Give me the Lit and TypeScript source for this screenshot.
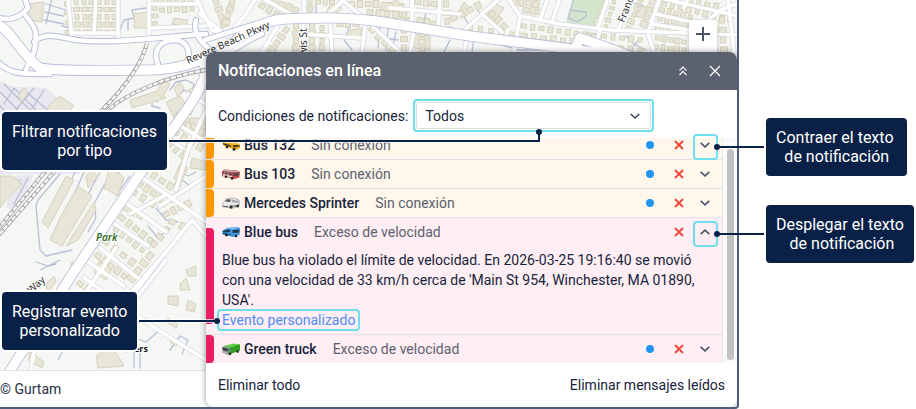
import { LitElement, html, svg, css, nothing } from "lit";
import { customElement, property, state } from "lit/decorators.js";
import { classMap } from "lit/directives/class-map.js";

type Point = [number, number];

/* ---------- map data ---------- */

const highways = [
  "M-4 24C12 30 20 54 40 68C60 72 120 70 150 70C180 70 205 60 225 48C245 34 262 20 285 19C330 17 350 18 375 21L470 36C520 43 570 47 640 60",
  "M206 72C200 96 176 124 140 174L75 270L8 374",
  "M640 60L600 45L580 38L570 60",
];

const ramps = [
  "M26 16C36 28 38 32 34 52C32 60 28 64 26 70",
  "M-2 62C10 74 20 74 50 74",
  "M34 42C44 32 56 36 76 40C110 44 150 38 206 34",
  "M158 64C152 50 160 40 176 40C190 42 192 56 184 66",
  "M196 20C192 36 204 44 212 52",
  "M-2 18C8 20 18 20 28 8L24 -4",
  "M205 40L262 22",
  "M202 66C226 58 238 44 262 34",
];

const streets = [
  "M68 -2L72 40", "M118 -2L118 40", "M149 -2L149 36", "M96 -2L94 34", "M152 4L200 4", "M72 33L118 33", "M150 28L206 26",
  "M196 -2L212 30L232 36", "M256 -2L246 14L228 36", "M200 14L222 32", "M262 -2L294 16", "M304 -2L304 52", "M346 -2L326 16", "M340 -2L366 20L400 52",
  "M366 20L362 52", "M412 -2L412 26", "M390 8L460 14", "M280 22L262 52", "M330 20L332 52", "M300 34L360 38", "M414 30L410 52", "M440 -2L438 30",
  "M460 34L500 -2", "M482 14L502 32", "M508 -2L520 16L516 40L514 52", "M520 16L560 24L610 30L738 35", "M548 -2L540 20", "M560 -2L552 22",
  "M608 -2L598 28", "M632 -2L618 30", "M660 -2L652 20L648 34L654 52", "M660 -2L738 16", "M656 14L700 24", "M652 24L690 30", "M738 4C722 6 714 16 706 22",
  "M728 -2L734 52", "M468 34L464 52", "M600 30L594 52", "M688 -2L684 8",
  "M192 96L206 104", "M178 124L206 142", "M140 176L206 222", "M122 200L166 232", "M112 222L148 246", "M100 248L138 278", "M88 262L124 286",
  "M160 206L206 176", "M176 190L188 150L206 110", "M206 236L192 220L158 262L122 310", "M168 138L182 148", "M130 214L164 196",
  "M168 250L124 300L110 350", "M84 278L152 326L206 360", "M116 248L60 330", "M60 282L108 328L126 350", "M44 300L30 374", "M138 296L166 260",
];

const minorWays = [
  "M46 4L66 10M45 12L63 16M44 20L64 24M52 -2L46 24M62 26L70 28", "M120 30L124 20L134 18L132 10L146 8M128 20L128 30",
  "M170 90L176 82L186 80L194 84L190 96M178 96L184 90L188 92", "M158 102L152 98L152 106L160 108",
  "M60 174L38 200L36 206L40 250L46 256L72 250M52 174L44 186M76 170L66 190M84 172L68 208M100 172L84 202M108 178L94 204L96 218L88 232",
  "M120 150L112 170M128 154L118 172L122 178M130 176L116 196", "M156 208L166 220L178 222M148 226L158 238L170 228",
  "M180 172L188 176L196 172M182 180L190 186", "M36 262L48 266L56 264M40 270L60 260",
  "M130 336L146 342L160 330L180 342M134 350L134 368M140 350L140 368M170 350L180 336L188 340L182 354", "M70 338L58 360M96 318L84 330",
  "M380 26L378 48M388 28L386 50M396 32L392 48M384 38L398 40", "M350 26L344 40L352 50M322 26L320 46M316 2L316 14",
  "M418 8L426 12L424 22M428 4L436 6", "M574 -2L568 18L578 22L586 16L586 12L570 10", "M626 36L634 44L646 50M640 38L634 46", "M630 2L644 6",
  "M450 40L444 52M474 38L472 52M490 42L520 50L560 50", "M462 14L470 26M474 4L480 14",
];

const rails = ["M147 43C142 62 130 82 104 108L48 168L-6 234", "M206 70C170 76 128 92 108 110L54 172L-2 236"];

/* street front, number of houses, house size */
const houseRows: [Point, Point, number, number][] = [
  [[76, 2], [78, 32], 5, 5], [[84, 2], [86, 32], 5, 5], [[91, 2], [91, 32], 5, 5], [[99, 2], [99, 32], 5, 5], [[107, 2], [107, 32], 5, 5],
  [[114, 2], [114, 32], 5, 5], [[66, 4], [68, 32], 4, 4], [[156, 1], [190, 1], 6, 4], [[155, 8], [155, 24], 3, 5], [[162, 10], [192, 9], 5, 5],
  [[216, 2], [224, 24], 4, 6], [[232, 2], [226, 22], 4, 6], [[262, 6], [284, 18], 4, 6], [[268, -1], [296, 10], 5, 6],
  [[310, 2], [310, 14], 3, 5], [[318, 2], [332, 2], 3, 5], [[296, 26], [296, 48], 4, 6], [[286, 30], [272, 50], 4, 6],
  [[312, 26], [312, 48], 4, 6], [[322, 28], [322, 48], 4, 5], [[340, 24], [356, 24], 3, 6], [[372, 30], [392, 50], 4, 6], [[396, 4], [408, 22], 3, 7],
  [[352, 4], [376, 4], 4, 6], [[370, 12], [404, 16], 5, 6], [[418, 2], [434, 4], 3, 6], [[420, 20], [434, 24], 3, 6], [[446, 4], [448, 30], 4, 6],
  [[404, 30], [404, 48], 3, 6], [[422, 34], [422, 50], 3, 6], [[454, 18], [478, 6], 4, 6], [[492, 14], [504, 26], 3, 6], [[514, 2], [536, 4], 4, 6],
  [[526, 10], [540, 12], 3, 6], [[524, 26], [594, 36], 9, 5], [[524, 36], [592, 44], 8, 6], [[470, 28], [512, 34], 5, 5],
  [[604, 4], [596, 24], 4, 4], [[614, 2], [606, 26], 5, 4], [[640, 2], [628, 28], 5, 5], [[652, 2], [644, 24], 4, 6],
  [[664, 4], [730, 20], 9, 5], [[662, 10], [690, 17], 5, 5], [[660, 19], [688, 25], 5, 5], [[658, 29], [688, 32], 5, 5], [[658, 38], [684, 42], 5, 5],
  [[656, 47], [684, 50], 5, 5], [[604, 36], [640, 40], 5, 5], [[602, 46], [640, 50], 5, 5], [[722, 20], [724, 50], 4, 6], [[690, 1], [716, 6], 4, 5],
  [[530, 47], [586, 50], 7, 5],
  [[178, 116], [202, 132], 4, 6], [[176, 132], [200, 147], 4, 6], [[170, 144], [182, 156], 3, 5], [[146, 170], [170, 186], 4, 6],
  [[140, 184], [160, 198], 4, 6], [[134, 192], [152, 204], 3, 6], [[126, 208], [140, 216], 3, 6], [[122, 218], [150, 240], 5, 6], [[116, 230], [142, 250], 5, 5],
  [[178, 194], [164, 204], 3, 5], [[166, 214], [188, 204], 4, 6], [[172, 222], [182, 226], 2, 6], [[166, 230], [154, 244], 3, 6],
  [[106, 242], [132, 262], 4, 6], [[98, 256], [124, 276], 5, 6], [[80, 284], [94, 294], 3, 6], [[150, 256], [132, 278], 4, 7], [[188, 146], [178, 184], 6, 5],
  [[190, 112], [184, 128], 3, 5],
];

const blocks = [
  "28,4 44,2 42,22 28,20", "134,14 148,12 148,28 134,28", "174,18 188,20 186,26 172,24", "130,100 160,90 166,98 132,108", "156,92 164,80 170,84 162,98",
  "166,102 180,96 188,108 176,122", "18,96 24,88 28,92 22,102", "48,106 60,96 74,106 66,114 48,114", "174,88 180,82 184,88 178,98", "188,90 200,84 202,92 194,96",
  "0,176 12,176 22,184 6,200 0,208", "66,176 74,180 48,228 42,222", "78,186 92,196 62,246 50,240 60,218", "94,202 96,210 78,240 66,246",
  "110,166 124,178 118,196 104,188", "86,176 92,170 98,176 88,188", "190,118 206,118 206,132 190,130", "192,158 206,162 206,170 190,168", "180,164 188,168 180,184 174,178",
  "100,260 112,268 106,280 94,272", "72,262 82,266 76,274 70,270", "96,322 108,328 120,346 98,352", "96,356 112,346 124,366 98,368", "30,352 44,362 42,368 28,360",
  "330,4 342,8 334,16 326,14", "350,30 362,28 360,40 348,38", "382,2 404,4 402,12 380,10", "414,34 430,36 430,50 414,48", "492,2 504,8 494,22 486,14",
  "584,32 598,34 596,44 584,42", "638,6 648,8 644,18 634,16", "464,2 472,10 464,18 458,12", "186,270 196,266 196,276 188,276", "180,284 186,278 190,290 180,290",
  "168,296 178,296 178,306 168,304", "188,300 196,304 194,312 186,310", "168,318 178,324 176,328 166,322", "172,340 178,344 176,346 170,342", "46,284 54,276 56,282 48,292",
];

const grassBlocks = ["574,-2 608,-2 592,28 566,22"];
const depotBlocks = ["-2,80 14,87 46,88 76,112 80,174 -2,174", "14,176 34,174 22,200 12,212 6,206"];
const depotLines = "M-2 90L22 114M4 84L34 114M14 88L40 114M24 90L50 112M-2 104L8 114M14 88L4 104M34 88L14 112M44 90L30 112M20 180L10 190M28 178L14 204";

function houses() {
  const out = [];
  for (const [[x1, y1], [x2, y2], n, size] of houseRows) {
    const angle = (Math.atan2(y2 - y1, x2 - x1) * 180) / Math.PI;
    for (let i = 0; i < n; i++) {
      const t = n > 1 ? i / (n - 1) : 0;
      const x = x1 + (x2 - x1) * t;
      const y = y1 + (y2 - y1) * t;
      const w = size - (i % 3 === 1 ? 1 : 0);
      const h = size + (i % 2 ? 1 : -1);
      out.push(svg`<rect x=${-w / 2} y=${-h / 2} width=${w} height=${h} transform="translate(${x.toFixed(1)} ${y.toFixed(1)}) rotate(${angle.toFixed(0)})"/>`);
    }
  }
  return out;
}

@customElement("city-map")
class CityMap extends LitElement {
  static styles = css`
    :host { display: block; overflow: hidden; background: #f5f7f4; }
    svg { display: block; width: 100%; height: 100%; }
    .depot { fill: #e9e7f0; }
    .grass { fill: #d3e5cc; }
    .way { fill: none; stroke-linecap: round; stroke-linejoin: round; }
    .minor { stroke: #b9bfd6; stroke-width: 1.3; }
    .street-edge { stroke: #d3d7e4; stroke-width: 5; }
    .street { stroke: #fff; stroke-width: 3.6; }
    .ramp-edge { stroke: #b7bdd9; stroke-width: 6.4; }
    .ramp { stroke: #fff; stroke-width: 4.6; }
    .highway-edge { stroke: #b7bdd9; stroke-width: 11; }
    .highway { stroke: #fff; stroke-width: 9.4; }
    .building { fill: #e8e5d9; stroke: #d6d2bb; stroke-width: 1; }
    .rail-edge { stroke: #a5a3a9; stroke-width: 4; stroke-linecap: butt; }
    .rail { stroke: #f5f7f4; stroke-width: 2.4; stroke-dasharray: 5 1.2; stroke-linecap: butt; }
    .name { font: 10px "Noto Sans", sans-serif; fill: #2b2b2b; stroke: #fff; stroke-width: 2; paint-order: stroke; stroke-linejoin: round; }
    .name.park { font-style: italic; font-weight: 600; fill: #2f6b2a; }
    .name.place { font-size: 9px; font-weight: 700; fill: #111; }
  `;

  render() {
    const draw = (paths: string[], name: string) => paths.map((d) => svg`<path class="way ${name}" d=${d}/>`);
    const fill = (shapes: string[], name: string) => shapes.map((p) => svg`<polygon class=${name} points=${p}/>`);
    return html`<svg viewBox="0 0 737 370" preserveAspectRatio="xMinYMin slice" aria-hidden="true">
      ${fill(depotBlocks, "depot")}${fill(grassBlocks, "grass")}
      ${draw([depotLines], "minor")}${draw(minorWays, "minor")}
      ${draw(streets, "street-edge")}
      ${fill(blocks, "building")}
      <g class="building">${houses()}</g>
      ${draw(streets, "street")}
      ${draw(ramps, "ramp-edge")}${draw(highways, "highway-edge")}
      ${draw(ramps, "ramp")}${draw(highways, "highway")}
      ${draw(rails, "rail-edge")}${draw(rails, "rail")}
      <text class="name" transform="translate(188 64) rotate(-24)">Revere Beach Pkwy</text>
      <text class="name" transform="translate(307 66) rotate(-90)">Lewis St</text>
      <text class="name" transform="translate(624 23) rotate(-68)">Franc</text>
      <text class="name park" x="96" y="241">Park</text>
      <text class="name" transform="translate(31 294) rotate(-42)">Way</text>
      <text class="name place" x="134" y="352">ers</text>
    </svg>`;
  }
}

/* ---------- vehicles ---------- */

type Vehicle = "school" | "red" | "van" | "blue" | "truck";

const vehicles: Record<Vehicle, unknown> = {
  school: svg`<path d="M0 3L3 1.2L16 4L18 6L18 9L14 11L2 7Z" fill="#e9a512"/><path d="M3 1.2L16 4L18 6L9 5L1 2.6Z" fill="#f7c23a"/><path d="M1 4L9 6.4V8L1 5.4ZM11 6.2L17.4 6V7.6L11.4 8.4Z" fill="#3f3a2c"/><circle cx="5" cy="8" r="1.3" fill="#222"/><circle cx="12" cy="10.4" r="1.4" fill="#222"/>`,
  red: svg`<path d="M0 3.4L2 1.4L15 2.4L18 4L17.4 9.4L12 11L0 8Z" fill="#c4474d"/><path d="M2 1.4L15 2.4L18 4L10 4.2L1 2.8Z" fill="#b9a9a8"/><path d="M1 4L9.4 5.2V7.2L1 5.6ZM11 5.4L17 4.8V7.4L11.4 8Z" fill="#54484c"/><path d="M1 6.2L10 8.4V9.4L1 7.2ZM3 3.4V6M6 3.8V7" fill="#e6dcdb" stroke="#e6dcdb" stroke-width=".5"/><circle cx="4" cy="8.8" r="1.2" fill="#222"/><circle cx="10" cy="10.4" r="1.3" fill="#222"/>`,
  van: svg`<path d="M0 7L2.6 4.2L4.4 1.6L12 1L17 3L18 8L12 11L1 10Z" fill="#e9eaeb" stroke="#8e9194" stroke-width=".6"/><path d="M3 4.6L5 2.2L9 2.4L8 5Z" fill="#50565d"/><path d="M10 2.6L16.6 4V6L9.6 5.2Z" fill="#a6abb0"/><circle cx="3" cy="7.6" r=".8" fill="#fff"/><circle cx="9" cy="10" r="1.7" fill="#333"/><circle cx="15.6" cy="9" r="1.5" fill="#333"/><path d="M1 9.2L6 9.6M10 9.4L17 8" stroke="#555"/>`,
  blue: svg`<path d="M0 5L5 2L15 .8L18 2L17.6 9L11 11L1 8.6Z" fill="#3d94dd"/><path d="M5 2L15 .8L18 2L10 3.4Z" fill="#85bff0"/><path d="M1 4.8L8 3.6V6L1 6.6ZM10.6 4L17.2 3.4V6.4L10.6 7Z" fill="#26384c"/><path d="M0 7L9 8V9.4L1 8.4Z" fill="#20689f"/><circle cx="4.4" cy="9" r="1.4" fill="#222"/><circle cx="14" cy="10" r="1.3" fill="#222"/>`,
  truck: svg`<path d="M7 3.4L17 1L18 2L18 7.4L9 10.8L7 9.6Z" fill="#2f9a24"/><path d="M1 3L12 .4L18 1.6L8 4.8Z" fill="#62cf46"/><path d="M0 4L2.2 3.2L8 4.8L8.6 11L6 12L.6 9.8Z" fill="#7e8f86"/><path d="M.8 4.8L6.4 6.2V8L1 7Z" fill="#2a3338"/><circle cx="8" cy="10.8" r="1.3" fill="#222"/><circle cx="15.6" cy="8.6" r="1.3" fill="#333"/><path d="M1 8.8L6 10.6" stroke="#e1e8e2" stroke-width=".7"/>`,
};

/* ---------- callouts ---------- */

@customElement("help-note")
class HelpNote extends LitElement {
  static styles = css`
    :host {
      display: block; box-sizing: border-box; width: max-content; padding: 10px;
      border-radius: 4px; background: #0a2147; color: #fff; box-shadow: 0 0 0 2px #fff;
      font: 16px/19px Roboto, sans-serif; text-align: center; white-space: pre-line;
    }
  `;
  @property() text = "";
  render() { return html`${this.text}`; }
}

/* ---------- notifications ---------- */

interface Notice {
  unit: string; vehicle: Vehicle; title: string; kind: "offline" | "speed"; unread: boolean; body?: string;
}

const notices: Notice[] = [
  { unit: "Bus 132", vehicle: "school", title: "Sin conexión", kind: "offline", unread: true },
  { unit: "Bus 103", vehicle: "red", title: "Sin conexión", kind: "offline", unread: true },
  { unit: "Mercedes Sprinter", vehicle: "van", title: "Sin conexión", kind: "offline", unread: true },
  {
    unit: "Blue bus", vehicle: "blue", title: "Exceso de velocidad", kind: "speed", unread: false,
    body: "Blue bus ha violado el límite de velocidad. En 2026-03-25 19:16:40 se movió con una velocidad de 33 km/h cerca de 'Main St 954, Winchester, MA 01890, USA'.",
  },
  { unit: "Green truck", vehicle: "truck", title: "Exceso de velocidad", kind: "speed", unread: true },
];

@customElement("notice-panel")
class NoticePanel extends LitElement {
  static styles = css`
    :host {
      display: block; overflow: hidden; border-radius: 8px; background: #fff; color: #16233b;
      font: 14px/20px Roboto, sans-serif; box-shadow: 0 0 6px rgba(0, 0, 0, 0.4);
    }
    button { display: grid; place-items: center; padding: 0; border: 0; background: none; color: inherit; font: inherit; cursor: pointer; }
    svg { display: block; fill: none; stroke: currentColor; }
    .head { display: flex; align-items: center; height: 38px; padding: 0 12px; background: #5b616e; color: #fff; }
    .title { flex: 1; margin: 0; font-size: 16px; font-weight: 500; line-height: 20px; }
    .head button { width: 20px; height: 20px; }
    .head-tools { display: flex; gap: 12px; }
    .filter { display: flex; align-items: center; gap: 5px; padding: 9px 12px 6px; }
    .picker { position: relative; flex: 0 1 241px; box-sizing: border-box; padding: 1px; border: 2px solid #6fdfee; border-radius: 4px; }
    .picker select {
      display: block; box-sizing: border-box; width: 100%; height: 27px; padding: 0 8px; appearance: none;
      border: 1px solid #dcdee2; border-radius: 3px; background: #fff; color: inherit; font: inherit;
    }
    .picker svg { position: absolute; right: 12px; top: 10px; color: #3c465a; pointer-events: none; }
    .scroller { display: flex; overflow: hidden; }
    .list { flex: 1; min-width: 0; margin: -7px 0 0; padding: 0; list-style: none; }
    .track { flex: none; width: 15px; box-sizing: border-box; padding: 11px 3px 3px 4px; border-left: 1px solid #e6e7ea; background: #fafafa; display: flex; }
    .thumb { flex: 1; border-radius: 4px; background: #c1c1c1; }
    .notice { display: flex; gap: 8px; border-bottom: 1px solid #dfe2e4; }
    .notice:last-child { border-bottom: 0; }
    .notice.offline { background: #fff7eb; }
    .notice.speed { background: #ffeef4; }
    .mark { flex: none; width: 8px; border-radius: 0 4px 4px 0; background: #ff9800; }
    .speed .mark { background: #e91e63; }
    .open .mark { margin: 10px 0; }
    .main { flex: 1; min-width: 0; }
    .line { display: flex; align-items: center; height: 28px; padding-right: 5px; }
    .vehicle { flex: none; width: 18px; height: 12px; margin-right: 4px; stroke: none; }
    .unit { font-weight: 500; }
    .kind { flex: 1; margin-left: 16px; color: #5b616e; }
    .dot { width: 8px; height: 8px; margin-right: 15px; border-radius: 50%; background: #2196f3; }
    .remove { width: 20px; height: 24px; margin-right: 4px; color: #f44336; }
    .toggle { width: 24px; height: 24px; color: #4b5568; }
    .body { margin: 0; padding: 4px 24px 0 0; }
    .event { position: relative; display: inline-block; margin-bottom: 4px; color: #4f8df7; text-decoration: none; }
    .event::before { content: ""; position: absolute; inset: -1px -5px; border: 2px solid #6fdfee; border-radius: 4px; }
    .foot { display: flex; justify-content: space-between; align-items: center; height: 44px; padding: 0 12px; }
  `;

  @state() private opened = new Set<string>(["Blue bus"]);

  private toggle(unit: string) {
    const next = new Set(this.opened);
    if (!next.delete(unit)) next.add(unit);
    this.opened = next;
  }

  private row(n: Notice) {
    const open = this.opened.has(n.unit) && !!n.body;
    return html`<li class=${classMap({ notice: true, [n.kind]: true, open })}>
      <span class="mark"></span>
      <div class="main">
        <div class="line">
          <svg class="vehicle" viewBox="0 0 18 12" aria-hidden="true">${vehicles[n.vehicle]}</svg>
          <span class="unit">${n.unit}</span>
          <span class="kind">${n.title}</span>
          ${n.unread ? html`<span class="dot"></span>` : nothing}
          <button class="remove" aria-label="Eliminar">
            <svg width="10" height="10" viewBox="0 0 10 10" stroke-width="1.8"><path d="M1 1L9 9M9 1L1 9"/></svg>
          </button>
          <button class="toggle" aria-label="Texto" aria-expanded=${open} @click=${() => this.toggle(n.unit)}>
            <svg width="10" height="6" viewBox="0 0 10 6" stroke-width="1.6"><path d=${open ? "M.7 5.2L5 1.2L9.3 5.2" : "M.7 .8L5 4.8L9.3 .8"}/></svg>
          </button>
        </div>
        ${open ? html`<p class="body">${n.body}</p><a class="event" href="#evento">Evento personalizado</a>` : nothing}
      </div>
    </li>`;
  }

  render() {
    return html`
      <header class="head">
        <h2 class="title">Notificaciones en línea</h2>
        <div class="head-tools">
          <button aria-label="Plegar"><svg width="8" height="10" viewBox="0 0 8 10" stroke-width="1.1"><path d="M.5 4.6L4 1L7.5 4.6M.5 9L4 5.4L7.5 9"/></svg></button>
          <button aria-label="Cerrar"><svg width="12" height="12" viewBox="0 0 12 12" stroke-width="1.3"><path d="M1 1L11 11M11 1L1 11"/></svg></button>
        </div>
      </header>
      <div class="filter">
        <label for="kind">Condiciones de notificaciones:</label>
        <div class="picker">
          <select id="kind"><option>Todos</option></select>
          <svg width="10" height="10" viewBox="0 0 10 10" stroke-width="1.6"><path d="M.7 3L5 7L9.3 3"/></svg>
        </div>
      </div>
      <div class="scroller">
        <ul class="list">${notices.map((n) => this.row(n))}</ul>
        <div class="track"><div class="thumb"></div></div>
      </div>
      <footer class="foot">
        <button>Eliminar todo</button>
        <button>Eliminar mensajes leídos</button>
      </footer>`;
  }
}

@customElement("app-root")
class AppRoot extends LitElement {
  static styles = css`
    :host { display: block; background: #fff; font-family: Roboto, sans-serif; }
    .page { position: relative; display: grid; grid-template-columns: minmax(0, 1fr) 177px; }
    .frame {
      position: relative; box-sizing: border-box; padding: 52px 0 0 206px; overflow: hidden;
      border: solid #4f5d7c; border-width: 0 2px 2px 0; border-radius: 0 0 4px 0;
    }
    .map { position: absolute; inset: 0 0 37px; }
    .credit {
      position: absolute; left: 0; right: 0; bottom: 0; height: 36px; border-top: 1px solid #dfe1e5;
      background: #fff; color: #26324a; font-size: 14px; line-height: 36px;
    }
    .zoom {
      position: absolute; right: 20px; top: 20px; width: 28px; height: 40px; padding: 6px; border: 0;
      border-radius: 4px; background: #fff; color: #4b5568; box-shadow: 0 1px 4px rgba(0, 0, 0, 0.25);
    }
    .zoom svg { display: block; fill: none; stroke: currentColor; stroke-width: 2; }
    .panel { position: relative; }
    .side { position: relative; display: flex; flex-direction: column; gap: 29px; padding: 118px 0 0 27px; }
    .note { position: absolute; left: 2px; }
    .note.filter { top: 112px; }
    .note.event { top: 292px; }
    .wire { position: absolute; height: 2px; background: #0a2147; box-shadow: 0 0 0 1px rgba(255, 255, 255, 0.7); }
    .wire.riser { width: 2px; height: 8px; left: 538px; top: 134px; box-shadow: none; }
    .wire.filter { left: 168px; width: 372px; top: 140px; }
    .wire.event { left: 138px; width: 78px; top: 320px; }
    .wire.fold { left: -20px; width: 45px; top: 146px; box-shadow: none; }
    .wire.unfold { left: -20px; width: 45px; top: 233px; box-shadow: none; }
    .pin { position: absolute; width: 6px; height: 6px; border-radius: 50%; background: #0a2147; }
    .pin.filter { left: 536px; top: 129px; }
    .pin.event { left: 214px; top: 318px; }
    .pin.fold { left: -25px; top: 144px; }
    .pin.unfold { left: -25px; top: 231px; }
    .ring { position: absolute; left: -46px; width: 25px; height: 26px; box-sizing: border-box; border: 2px solid #6fdfee; border-radius: 4px; pointer-events: none; }
    .ring.fold { top: 134px; }
    .ring.unfold { top: 221px; }
  `;

  render() {
    return html`<div class="page">
      <main class="frame">
        <city-map class="map"></city-map>
        <div class="credit">© Gurtam</div>
        <button class="zoom" aria-label="Acercar"><svg width="16" height="28" viewBox="0 0 16 28"><path d="M1 8H15M8 1V15"/></svg></button>
        <notice-panel class="panel"></notice-panel>
      </main>
      <aside class="side">
        <help-note .text=${"Contraer el texto\u00a0\nde notificación"}></help-note>
        <help-note .text=${"Desplegar el texto\n\u00a0de notificación"}></help-note>
        ${["fold", "unfold"].map((n) => html`<span class="ring ${n}"></span><span class="wire ${n}"></span><span class="pin ${n}"></span>`)}
      </aside>
      <span class="wire filter"></span><span class="wire riser"></span><span class="pin filter"></span>
      <span class="wire event"></span><span class="pin event"></span>
      <help-note class="note filter" .text=${"Filtrar notificaciones\npor tipo"}></help-note>
      <help-note class="note event" .text=${"Registrar evento\npersonalizado"}></help-note>
    </div>`;
  }
}
